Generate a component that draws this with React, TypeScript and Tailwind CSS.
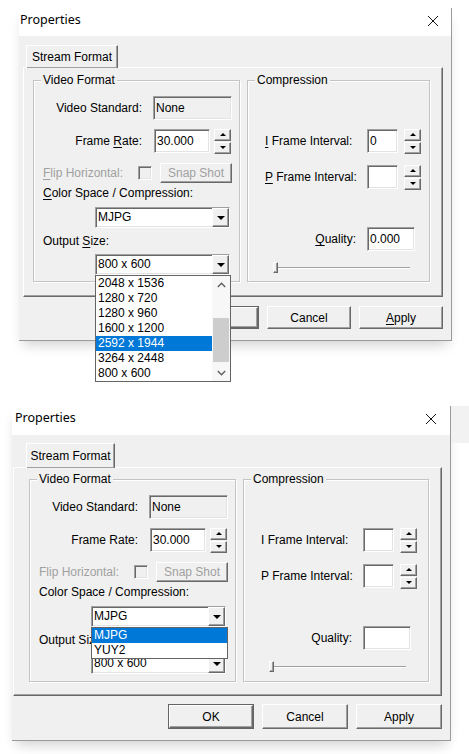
import type { ReactNode } from "react";

const raised =
  "border border-t-white border-l-white border-r-[#696969] border-b-[#696969] shadow-[inset_-1px_-1px_0_#a0a0a0]";
const sunken =
  "border border-t-[#a0a0a0] border-l-[#a0a0a0] border-b-white border-r-white shadow-[inset_1px_1px_0_#696969,inset_-1px_-1px_0_#e3e3e3]";

const SIZES = ["2048 x 1536", "1280 x 720", "1280 x 960", "1600 x 1200", "2592 x 1944", "3264 x 2448", "800 x 600"];

function Mn({ on, children }: { on: boolean; children: string }) {
  if (!on) {
    return <>{children}</>;
  }
  return <span className="underline decoration-1 underline-offset-[2px]">{children}</span>;
}

function UpTri() {
  return <span className="block h-0 w-0 border-x-[3px] border-b-[3px] border-x-transparent border-b-black" />;
}

function DownTri() {
  return <span className="block h-0 w-0 border-x-[3px] border-t-[3px] border-x-transparent border-t-black" />;
}

function Spin({ className = "" }: { className?: string }) {
  return (
    <div className={`flex h-[25px] w-[17px] flex-col gap-px ${className}`}>
      <div className={`flex h-[12px] items-center justify-center bg-[#f0f0f0] ${raised}`}>
        <UpTri />
      </div>
      <div className={`flex h-[12px] items-center justify-center bg-[#f0f0f0] ${raised}`}>
        <DownTri />
      </div>
    </div>
  );
}

function Combo({ value, children }: { value: string; children?: ReactNode }) {
  return (
    <div className={`relative flex h-[21px] w-[135px] bg-white ${sunken}`}>
      <span className="flex-1 pl-[2px] leading-[19px]">{value}</span>
      <div className={`flex w-[17px] items-center justify-center bg-[#f0f0f0] ${raised}`}>
        <span className="block h-0 w-0 border-x-[4px] border-t-[4px] border-x-transparent border-t-black" />
      </div>
      {children}
    </div>
  );
}

function Chevron({ up }: { up: boolean }) {
  return (
    <svg width="9" height="6" viewBox="0 0 9 6" fill="none" stroke="#606060" strokeWidth="1.4">
      {up ? <polyline points="0.8,5 4.5,1.2 8.2,5" /> : <polyline points="0.8,1 4.5,4.8 8.2,1" />}
    </svg>
  );
}

function SizeList() {
  return (
    <div className="absolute left-[-1px] top-full z-20 mt-px flex h-[107px] w-[136px] border border-[#646464] bg-white">
      <div className="flex-1">
        {SIZES.map((size, index) => (
          <div
            key={size}
            className={
              index === 4
                ? "h-[15px] bg-[#0078d7] pl-[2px] leading-[15px] text-white"
                : "h-[15px] pl-[2px] leading-[15px]"
            }
          >
            {size}
          </div>
        ))}
      </div>
      <div className="flex w-[18px] flex-col bg-[#f7f7f7]">
        <div className="flex h-[17px] items-center justify-center">
          <Chevron up />
        </div>
        <div className="mt-[25px] h-[44px] mx-[1px] bg-[#cdcdcd]" />
        <div className="mt-auto flex h-[17px] items-center justify-center">
          <Chevron up={false} />
        </div>
      </div>
    </div>
  );
}

function FormatList() {
  return (
    <div className="absolute left-[-1px] top-full z-20 mt-px h-[32px] w-[137px] border border-[#646464] bg-white">
      <div className="h-[15px] bg-[#0078d7] pl-[2px] leading-[15px] text-white">MJPG</div>
      <div className="h-[15px] pl-[2px] leading-[15px]">YUY2</div>
    </div>
  );
}

function Group({ label, className, children }: { label: string; className: string; children: ReactNode }) {
  return (
    <div className={`relative border border-[#c4c4c4] shadow-[inset_1px_1px_0_#fff,1px_1px_0_#fff] ${className}`}>
      <span className="absolute left-[7px] top-[-8px] bg-[#f0f0f0] px-[2px] leading-[14px]">{label}</span>
      {children}
    </div>
  );
}

function Field({ value, className }: { value: string; className: string }) {
  return <div className={`flex h-[24px] items-center bg-white pl-[2px] ${sunken} ${className}`}>{value}</div>;
}

function PropertiesDialog({ first }: { first: boolean }) {
  return (
    <div
      className={
        first
          ? "ml-[19px] w-[433px] border-r border-b border-[#9a9a9a] shadow-[0_8px_12px_-4px_rgba(0,0,0,0.18)]"
          : "ml-[12px] w-[439px] border-r border-b border-[#9a9a9a] shadow-[0_8px_12px_-4px_rgba(0,0,0,0.18)]"
      }
    >
      <div
        className={
          first
            ? "flex h-[28px] items-center justify-between bg-white pb-[3px] pl-[1px] pr-[13px]"
            : "flex h-[29px] items-center justify-between bg-white pb-[4px] pl-[3px] pr-[14px]"
        }
      >
        <span className="font-['Noto_Sans',sans-serif] text-[12.5px] text-black">Properties</span>
        <svg width="10" height="10" viewBox="0 0 10 10" stroke="#111" strokeWidth="1">
          <line x1="0" y1="0" x2="10" y2="10" />
          <line x1="10" y1="0" x2="0" y2="10" />
        </svg>
      </div>

      <div className={first ? "h-[304px] bg-[#f0f0f0] pt-[9px] pl-[4px]" : "h-[305px] bg-[#f0f0f0] pt-[8px] pl-[1px]"}>
        <div className={first ? "w-[420px]" : "w-[429px]"}>
          <div
            className={
              first
                ? `relative z-10 -mb-px ml-[3px] flex h-[23px] w-[92px] items-center justify-center border-b-0 bg-[#f0f0f0] ${raised}`
                : `relative z-10 -mb-px ml-[13px] flex h-[25px] w-[89px] items-center justify-center border-b-0 bg-[#f0f0f0] ${raised}`
            }
          >
            Stream Format
          </div>

          <div
            className={
              first
                ? `flex h-[230px] gap-[7px] pl-[9px] pr-[12px] pt-[12px] ${raised}`
                : `flex h-[229px] gap-[7px] pl-[15px] pr-[12px] pt-[11px] ${raised}`
            }
          >
            <Group label="Video Format" className={first ? "h-[202px] w-[207px] pt-[15px]" : "h-[203px] w-[207px] pt-[15px]"}>
              <div className="flex h-[24px] items-center">
                <span className="w-[108px] text-right">Video Standard:</span>
                <div className={`ml-[11px] flex h-[24px] w-[79px] items-center bg-[#f0f0f0] pl-[2px] ${sunken}`}>None</div>
              </div>
              <div className="mt-[9px] flex h-[24px] items-center">
                <span className="w-[108px] text-right">
                  Frame <Mn on={first}>R</Mn>ate:
                </span>
                <Field value="30.000" className="ml-[12px] w-[56px]" />
                <Spin className="ml-[4px]" />
              </div>
              <div className="mt-[10px] flex h-[20px] items-center pl-[9px]">
                <span className="w-[95px] text-[#a0a0a0]">
                  <Mn on={first}>F</Mn>lip Horizontal:
                </span>
                <div className={`h-[14px] w-[14px] bg-[#f0f0f0] ${sunken}`} />
                <div className={`ml-[8px] flex h-[20px] w-[72px] items-center justify-center text-[#a0a0a0] ${raised}`}>
                  Snap Shot
                </div>
              </div>
              <div className="mt-[3px] pl-[9px] leading-[14px]">
                <Mn on={first}>C</Mn>olor Space / Compression:
              </div>
              <div className="ml-[61px] mt-[7px]">
                <Combo value="MJPG">{first ? null : <FormatList />}</Combo>
              </div>
              <div className="mt-[6px] pl-[9px] leading-[14px]">
                Output <Mn on={first}>S</Mn>ize:
              </div>
              <div className="ml-[61px] mt-[6px]">
                <Combo value="800 x 600">{first ? <SizeList /> : null}</Combo>
              </div>
            </Group>

            <Group label="Compression" className={first ? "h-[202px] flex-1 pt-[48px]" : "h-[203px] flex-1 pt-[48px]"}>
              <div className="flex h-[24px] items-center pl-[17px]">
                <span className="w-[102px]">
                  <Mn on={first}>I</Mn> Frame Interval:
                </span>
                <Field value={first ? "0" : ""} className="w-[31px]" />
                <Spin className="ml-[6px]" />
              </div>
              <div className="mt-[12px] flex h-[24px] items-center pl-[17px]">
                <span className="w-[102px]">
                  <Mn on={first}>P</Mn> Frame Interval:
                </span>
                <Field value="" className="w-[31px]" />
                <Spin className="ml-[6px]" />
              </div>
              <div className="mt-[38px] flex h-[24px] items-center">
                <span className="w-[108px] text-right">
                  <Mn on={first}>Q</Mn>uality:
                </span>
                <Field value={first ? "0.000" : ""} className="ml-[11px] w-[48px]" />
              </div>
              <div className="relative ml-[25px] mt-[11px] flex h-[11px] w-[137px] items-center">
                <div className="h-[2px] w-full border-t border-b border-t-[#a0a0a0] border-b-white" />
                <div className={`absolute left-0 top-0 h-[11px] w-[5px] bg-[#f0f0f0] ${raised}`} />
              </div>
            </Group>
          </div>

          <div className={first ? "mt-[9px] flex justify-end gap-[8px]" : "mt-[8px] flex justify-end gap-[8px]"}>
            <div className={first ? "h-[23px] w-[84px] border border-[#646464]" : "h-[25px] w-[86px] border border-[#646464]"}>
              <div className={`flex h-full items-center justify-center bg-[#f0f0f0] ${raised}`}>OK</div>
            </div>
            <div className={first ? `flex h-[23px] w-[84px] items-center justify-center ${raised}` : `flex h-[25px] w-[86px] items-center justify-center ${raised}`}>
              Cancel
            </div>
            <div className={first ? `flex h-[23px] w-[84px] items-center justify-center ${raised}` : `flex h-[25px] w-[86px] items-center justify-center ${raised}`}>
              <span>
                <Mn on={first}>A</Mn>pply
              </span>
            </div>
          </div>
        </div>
      </div>
    </div>
  );
}

export default function App() {
  return (
    <div className="h-[754px] w-[469px] overflow-hidden bg-white font-['Liberation_Sans',Arial,sans-serif] text-[12px] text-black">
      <div className="pt-[8px]">
        <PropertiesDialog first />
      </div>
      <div className="mt-[65px] flex">
        <PropertiesDialog first={false} />
        <div className="h-[37px] flex-1 bg-[#f2f2f2]" />
      </div>
    </div>
  );
}
